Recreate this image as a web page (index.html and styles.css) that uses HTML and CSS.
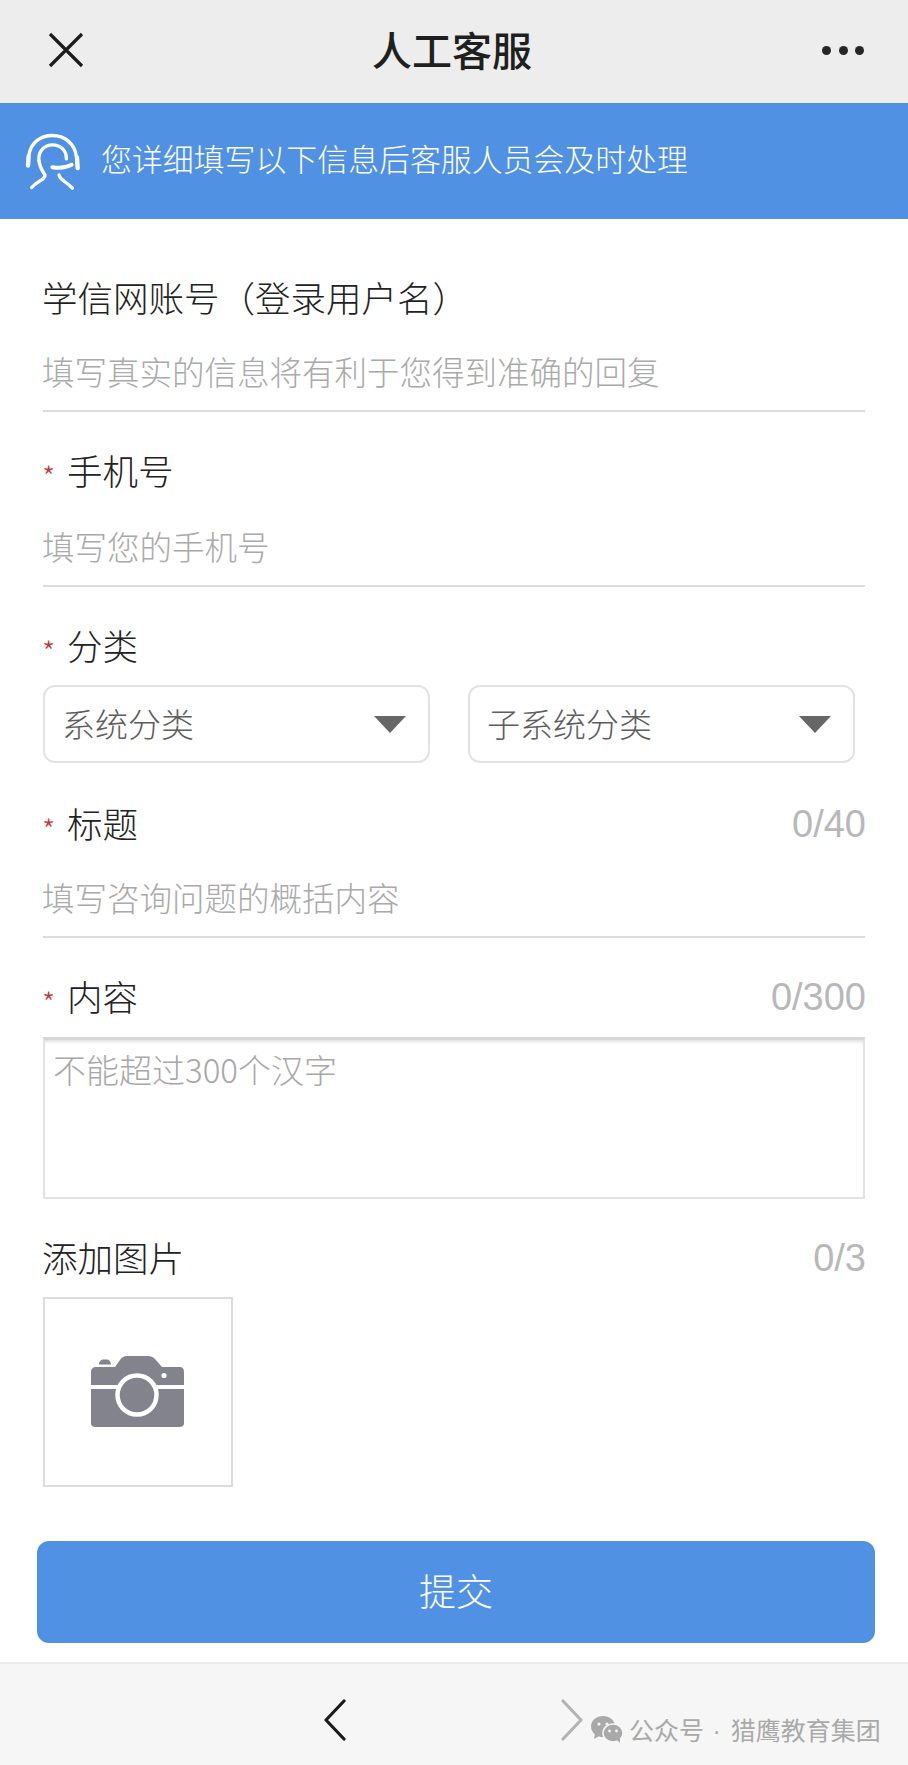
FILE: index.html
```html
<!DOCTYPE html>
<html>
<head>
  <meta charset="UTF-8">
  <title>人工客服</title>
  <link rel="stylesheet" href="styles.css">
</head>
<body>
  <div class="top-bar">
    <svg class="top-close" width="38" height="38" viewBox="0 0 38 38"><path d="M3 3 L35 35 M35 3 L3 35" stroke="#1c1c1c" stroke-width="3.2" fill="none"/></svg>
    <div class="top-title">人工客服</div>
    <div class="top-more"><span></span><span></span><span></span></div>
  </div>

  <div class="notice">
    <svg class="notice-icon" width="55" height="57" viewBox="70 35 165 170" fill="none" stroke="#fff" stroke-width="10" stroke-linecap="round" stroke-linejoin="round">
      <path d="M82 100 C88 62 118 42 152 42 C190 42 220 68 224 105"/>
      <path d="M81 104 L79 132" stroke-width="13"/>
      <path d="M226 108 L228 140" stroke-width="13"/>
      <path d="M112 118 C108 88 130 70 152 70 C178 70 195 88 194 112"/>
      <path d="M112 118 C114 140 124 150 130 160 C132 174 108 178 90 198"/>
      <path d="M172 160 C172 175 195 180 212 200"/>
      <path d="M152 137 C172 140 195 138 210 130" stroke-width="12"/>
    </svg>
    <div class="notice-text">您详细填写以下信息后客服人员会及时处理</div>
  </div>

  <form class="form">
    <div class="field field-first">
      <div class="label-row"><label>学信网账号（登录用户名）</label></div>
      <div class="input-line">填写真实的信息将有利于您得到准确的回复</div>
    </div>

    <div class="field">
      <div class="label-row"><label><span class="req">*</span>手机号</label></div>
      <div class="input-line input-tall">填写您的手机号</div>
    </div>

    <div class="field field-select">
      <div class="label-row"><label><span class="req">*</span>分类</label></div>
      <div class="select-row">
        <div class="select"><span>系统分类</span><i class="caret"></i></div>
        <div class="select"><span>子系统分类</span><i class="caret"></i></div>
      </div>
    </div>

    <div class="field">
      <div class="label-row"><label><span class="req">*</span>标题</label><span class="count">0/40</span></div>
      <div class="input-line">填写咨询问题的概括内容</div>
    </div>

    <div class="field">
      <div class="label-row"><label><span class="req">*</span>内容</label><span class="count">0/300</span></div>
      <div class="textarea">不能超过300个汉字</div>
    </div>

    <div class="field">
      <div class="label-row"><label>添加图片</label><span class="count">0/3</span></div>
      <div class="upload">
        <svg width="93" height="71" viewBox="0 0 93 71">
          <path fill="#82838d" d="M5 11 H24 L29 4 C31 1 33 0 36 0 H57 C60 0 62 1 64 3 L71 11 H88 C92 11 93 13 93 16 V67 C93 70 91 71 88 71 H5 C2 71 0 70 0 67 V16 C0 13 2 11 5 11 Z"/>
          <path fill="#82838d" d="M8 8.5 C8 5 10 3.5 13 3.5 H16 C18 3.5 20 6 20 8.5 Z"/>
          <rect x="0" y="29" width="93" height="4" fill="#fff"/>
          <circle cx="46" cy="39" r="19.5" fill="#82838d" stroke="#fff" stroke-width="4.5"/>
          <circle cx="73" cy="19.5" r="2.6" fill="#fff"/>
        </svg>
      </div>
    </div>

    <button class="submit" type="button">提交</button>
  </form>

  <div class="bottom-bar">
    <svg class="nav-back" width="24" height="42" viewBox="0 0 24 42"><path d="M21 2 L3 21 L21 40" stroke="#1a1a1a" stroke-width="3.2" fill="none" stroke-linecap="round" stroke-linejoin="round"/></svg>
    <svg class="nav-next" width="24" height="42" viewBox="0 0 24 42"><path d="M3 2 L21 21 L3 40" stroke="#b4b4b4" stroke-width="3.2" fill="none" stroke-linecap="round" stroke-linejoin="round"/></svg>
    <div class="watermark">
      <svg width="32" height="27" viewBox="0 0 32 27">
        <ellipse cx="12" cy="10.5" rx="12" ry="10.5" fill="#a9a9a9"/>
        <path d="M4 17 L3 23 L10 19 Z" fill="#a9a9a9"/>
        <ellipse cx="22" cy="17" rx="10" ry="9" fill="#a9a9a9" stroke="#f6f6f6" stroke-width="1.5"/>
        <path d="M26 24 L29 27 L29 21 Z" fill="#a9a9a9"/>
        <circle cx="8" cy="8" r="1.6" fill="#f6f6f6"/><circle cx="16" cy="8" r="1.6" fill="#f6f6f6"/>
        <circle cx="18.5" cy="15" r="1.4" fill="#f6f6f6"/><circle cx="25.5" cy="15" r="1.4" fill="#f6f6f6"/>
      </svg>
      <span>公众号<span class="dot"> · </span>猎鹰教育集团</span>
    </div>
  </div>
</body>
</html>
```

FILE: styles.css
```css
* {
  box-sizing: border-box;
}
html, body {
  margin: 0;
  height: 100%;
}
body {
  width: 908px;
  height: 1765px;
  overflow: hidden;
  background: #fff;
  font-family: "Noto Sans CJK SC", "Noto Sans", sans-serif;
  color: #222;
  display: flex;
  flex-direction: column;
}

/* top bar */
.top-bar {
  height: 103px;
  flex: none;
  background: #ededed;
  display: flex;
  align-items: center;
  justify-content: space-between;
  padding: 0 44px 2px 47px;
  position: relative;
}
.top-close {
  margin-bottom: 2px;
}
.top-title {
  position: absolute;
  left: 372px;
  top: -2px;
  font-size: 40px;
  font-weight: 500;
  line-height: 103px;
  color: #1f1f1f;
}
.top-more {
  display: flex;
  gap: 7.5px;
}
.top-more span {
  width: 9px;
  height: 9px;
  border-radius: 50%;
  background: #262626;
}

/* blue notice */
.notice {
  height: 116px;
  flex: none;
  background: #5191e4;
  display: flex;
  align-items: center;
  padding-left: 25px;
  gap: 21px;
}
.notice-text {
  padding-bottom: 7px;
  font-size: 30.9px;
  color: #fff;
  font-weight: 300;
  white-space: nowrap;
}

/* form */
.form {
  flex: 1;
  padding: 0 43px;
}
.field {
  padding-top: 33px;
}
.field-first {
  padding-top: 53px;
}
.label-row {
  height: 50px;
  display: flex;
  align-items: center;
  justify-content: space-between;
}
label {
  font-size: 35.5px;
  line-height: 50px;
  color: #222;
  font-weight: 300;
  display: flex;
  align-items: center;
  white-space: nowrap;
  margin-left: -1px;
}
.req {
  color: #c0393b;
  font-size: 30px;
  width: 25px;
  padding-top: 12px;
  line-height: 50px;
}
.count {
  padding-top: 3px;
  font-size: 38px;
  color: #b8b8b8;
  font-family: "Liberation Sans", sans-serif;
  margin-right: -1px;
}
.input-line {
  height: 90px;
  padding-top: 24px;
  font-size: 32.5px;
  line-height: 50px;
  color: #aaa;
  font-weight: 300;
  text-indent: -1px;
  border-bottom: 2px solid #dcdcdc;
}
.input-tall {
  height: 92px;
  padding-top: 26px;
}

.field-select {
  padding-bottom: 2px;
}
.select-row {
  margin-top: 15px;
  display: flex;
  gap: 38px;
}
.select {
  width: 387px;
  height: 78px;
  border: 2px solid #e2e2e2;
  border-radius: 12px;
  display: flex;
  align-items: center;
  justify-content: space-between;
  padding: 0 22px 0 17px;
  font-size: 33px;
  font-weight: 300;
  color: #5e5e5e;
}
.select span {
  padding-bottom: 3px;
}
.caret {
  width: 0;
  height: 0;
  border-left: 16px solid transparent;
  border-right: 16px solid transparent;
  border-top: 17px solid #666;
}

.textarea {
  margin-top: 16px;
  height: 162px;
  border: 2px solid #e2e2e2;
  border-top: 3px solid #d6d6d6;
  box-shadow: inset 0 3px 3px -1px #e2e2e2;
  padding: 4px 8px;
  font-size: 33px;
  line-height: 50px;
  font-weight: 300;
  color: #a8a8a8;
}

.upload {
  margin-top: 15px;
  width: 190px;
  height: 190px;
  border: 2px solid #dcdcdc;
  display: flex;
  align-items: center;
  justify-content: center;
  padding: 0 2px 2px 0;
}

.submit {
  display: block;
  width: 838px;
  height: 102px;
  margin: 54px 0 0 -6px;
  border: none;
  border-radius: 12px;
  background: #5191e4;
  color: #fff;
  font-family: inherit;
  font-size: 37px;
  font-weight: 300;
  padding: 0 0 4px;
}

/* bottom bar */
.bottom-bar {
  height: 103px;
  flex: none;
  background: #f6f6f6;
  border-top: 2px solid #ebebeb;
  position: relative;
}
.nav-back, .nav-next, .watermark {
  position: absolute;
}
.nav-back {
  left: 323px;
  top: 35px;
}
.nav-next {
  left: 560px;
  top: 35px;
}
.watermark {
  left: 591px;
  top: 47px;
  display: flex;
  align-items: center;
  gap: 6px;
  font-size: 25px;
  color: #a9a9a9;
  white-space: nowrap;
}
.dot {
  font-family: "Liberation Sans", sans-serif;
  letter-spacing: 1.5px;
}
```
